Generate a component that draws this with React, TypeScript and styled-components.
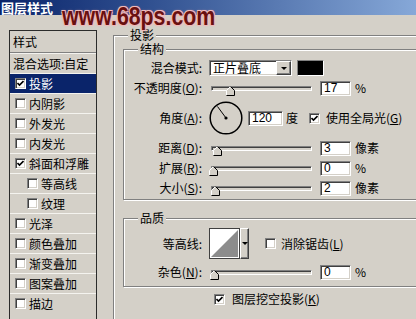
import styled, { createGlobalStyle, css } from "styled-components";

const GlobalStyle = createGlobalStyle`
  body {
    margin: 0;
  }
`;

const FONT = `"Noto Sans CJK SC", "Liberation Sans", sans-serif`;

const sunken = css`
  border: 1px solid;
  border-color: #808080 #fff #fff #808080;
  box-shadow: inset 1px 1px 0 #404040, inset -1px -1px 0 #d4d0c8;
`;

const raised = css`
  border: 1px solid;
  border-color: #fff #404040 #404040 #fff;
  box-shadow: inset -1px -1px 0 #808080;
`;

const Dialog = styled.div`
  position: relative;
  width: 416px;
  height: 319px;
  overflow: hidden;
  background: #d4d0c8;
  font-family: ${FONT};
  font-size: 12px;
  line-height: 16px;
  color: #000;
  box-sizing: border-box;
  * {
    box-sizing: border-box;
  }
`;

const TitleBar = styled.div`
  height: 15px;
  padding-left: 1px;
  display: flex;
  align-items: center;
  background: linear-gradient(90deg, #0a246a 0%, #2f4f8f 35%, #86a8d8 100%);
  color: #fff;
  font-size: 13px;
  font-weight: bold;
  line-height: 15px;
`;

const Watermark = styled.div`
  position: absolute;
  left: 62px;
  top: 1px;
  transform: scaleX(0.82);
  transform-origin: left center;
  font-family: "Liberation Sans", Arial, sans-serif;
  font-weight: bold;
  font-size: 26px;
  line-height: 30px;
  color: #6a1010;
  text-shadow: 1px 1px 0 #f0baba, -1px -1px 0 #f0baba, 1px -1px 0 #f0baba,
    -1px 1px 0 #f0baba, 0 0 3px #e8a0a0;
`;

const Body = styled.div`
  display: flex;
  align-items: flex-start;
  gap: 16px;
  padding: 15px 0 0 9px;
`;

const StyleList = styled.div`
  flex: none;
  width: 88px;
  height: 300px;
  border: 1px solid #2b2b2b;
`;

const ListHeader = styled.div`
  height: 22px;
  padding-left: 3px;
  display: flex;
  align-items: center;
  border-bottom: 1px solid #808080;
`;

const ListRow = styled.div<{ $selected?: boolean; $indent?: boolean; $plain?: boolean }>`
  height: 20px;
  border-top: 1px solid #f4f3ef;
  display: flex;
  align-items: center;
  gap: 3px;
  padding-left: ${(p) => (p.$plain ? 3 : p.$indent ? 17 : 5)}px;
  white-space: nowrap;
  background: ${(p) => (p.$selected ? "#0a246a" : "transparent")};
  color: ${(p) => (p.$selected ? "#fff" : "#000")};
`;

const Side = styled.div`
  flex: none;
  width: 330px;
  padding-top: 5px;
`;

const Group = styled.div<{ $pad: string }>`
  position: relative;
  border: 1px solid #808080;
  box-shadow: inset 1px 1px 0 #fff, 1px 1px 0 #fff;
  padding: ${(p) => p.$pad};
`;

const ShadowGroup = styled(Group)`
  height: 300px;
`;

const Legend = styled.span`
  position: absolute;
  top: -9px;
  left: 14px;
  padding: 0 2px;
  background: #d4d0c8;
  line-height: 16px;
`;

const Rows = styled.div<{ $gap: number }>`
  display: flex;
  flex-direction: column;
  gap: ${(p) => p.$gap}px;
`;

const Row = styled.div<{ $h: number }>`
  height: ${(p) => p.$h}px;
  display: flex;
  align-items: center;
  white-space: nowrap;
`;

const Label = styled.span`
  flex: none;
  width: 78px;
  margin-right: 7px;
  text-align: right;
`;

const Select = styled.div`
  ${sunken};
  width: 83px;
  height: 16px;
  display: flex;
  background: #fff;
`;

const SelectText = styled.span`
  flex: 1;
  padding-left: 3px;
  line-height: 13px;
`;

const DropButton = styled.span<{ $w: number }>`
  ${raised};
  flex: none;
  width: ${(p) => p.$w}px;
  display: flex;
  align-items: center;
  justify-content: center;
  background: #d4d0c8;
  &::after {
    content: "";
    border-left: 3px solid transparent;
    border-right: 3px solid transparent;
    border-top: 3px solid #000;
  }
`;

const Swatch = styled.span`
  flex: none;
  width: 27px;
  height: 16px;
  margin-left: 5px;
  background: #000;
  border: 1px solid;
  border-color: #808080 #fff #fff #808080;
`;

const Field = styled.span<{ $w?: number }>`
  ${sunken};
  flex: none;
  width: ${(p) => p.$w ?? 31}px;
  height: 15px;
  padding-left: 3px;
  background: #fff;
  font-family: "Liberation Sans", Arial, sans-serif;
  font-size: 12px;
  line-height: 13px;
`;

const Unit = styled.span<{ $ml?: number }>`
  margin-left: ${(p) => p.$ml ?? 4}px;
`;

const Track = styled.div`
  ${sunken};
  position: relative;
  flex: none;
  width: 101px;
  height: 5px;
  margin: 0 8px 0 2px;
  background: #d4d0c8;
  box-shadow: inset 1px 1px 0 #404040;
`;

const Thumb = styled.svg`
  position: absolute;
  top: -1px;
`;

const CheckBox = styled.span`
  ${sunken};
  flex: none;
  width: 11px;
  height: 11px;
  background: #fff;
  display: flex;
  align-items: center;
  justify-content: center;
`;

const CheckText = styled.span<{ $ml: number }>`
  margin-left: ${(p) => p.$ml}px;
`;

const Dial = styled.svg`
  flex: none;
  margin-right: 5px;
`;

const ContourPreview = styled.svg`
  flex: none;
`;

const KnockoutRow = styled.div`
  display: flex;
  align-items: center;
  height: 12px;
  margin-top: 6px;
  padding-left: 91px;
  white-space: nowrap;
`;

function Check({ checked }: { checked?: boolean }) {
  return (
    <CheckBox>
      {checked && (
        <svg width="7" height="7" viewBox="0 0 7 7">
          <path d="M0.5 3 L2.5 5 L6.5 1" fill="none" stroke="#000" strokeWidth="1.6" />
        </svg>
      )}
    </CheckBox>
  );
}

function Slider({ at }: { at: number }) {
  return (
    <Track>
      <Thumb width="9" height="10" viewBox="0 0 9 10" style={{ left: at }}>
        <polygon points="0.5,4.5 4.5,0.5 8.5,4.5 8.5,9.5 0.5,9.5" fill="#d4d0c8" />
        <polyline points="0.5,9 0.5,4.5 4.5,0.5" fill="none" stroke="#fff" />
        <polyline points="4.5,0.5 8.5,4.5 8.5,9.5 0.5,9.5" fill="none" stroke="#000" />
      </Thumb>
    </Track>
  );
}

const layers = [
  { name: "投影", on: true, selected: true },
  { name: "内阴影" },
  { name: "外发光" },
  { name: "内发光" },
  { name: "斜面和浮雕", on: true },
  { name: "等高线", indent: true },
  { name: "纹理", indent: true },
  { name: "光泽" },
  { name: "颜色叠加" },
  { name: "渐变叠加" },
  { name: "图案叠加" },
  { name: "描边" },
];

export default function App() {
  return (
    <Dialog>
      <GlobalStyle />
      <TitleBar>图层样式</TitleBar>
      <Body>
        <StyleList>
          <ListHeader>样式</ListHeader>
          <ListRow $plain>混合选项:自定</ListRow>
          {layers.map((l) => (
            <ListRow key={l.name} $selected={l.selected} $indent={l.indent}>
              <Check checked={l.on} />
              {l.name}
            </ListRow>
          ))}
        </StyleList>

        <Side>
          <ShadowGroup $pad="13px 9px 0 9px">
            <Legend>投影</Legend>
            <Group $pad="10px 0 3px 0">
              <Legend>结构</Legend>
              <Rows $gap={4}>
                <Row $h={16}>
                  <Label>混合模式:</Label>
                  <Select>
                    <SelectText>正片叠底</SelectText>
                    <DropButton $w={15} />
                  </Select>
                  <Swatch />
                </Row>
                <Row $h={16}>
                  <Label>
                    不透明度(<u>O</u>):
                  </Label>
                  <Slider at={14} />
                  <Field>17</Field>
                  <Unit>%</Unit>
                </Row>
                <Row $h={36}>
                  <Label>
                    角度(<u>A</u>):
                  </Label>
                  <Dial width="34" height="34" viewBox="0 0 34 34">
                    <circle cx="17" cy="17" r="15.8" fill="none" stroke="#000" strokeWidth="1.5" />
                    <line x1="17" y1="17" x2="8.5" y2="5.5" stroke="#000" strokeWidth="1" />
                    <circle cx="17" cy="17" r="1.6" fill="#000" />
                  </Dial>
                  <Field $w={35}>120</Field>
                  <Unit $ml={3}>度</Unit>
                  <Unit $ml={11}>
                    <Check checked />
                  </Unit>
                  <CheckText $ml={6}>
                    使用全局光(<u>G</u>)
                  </CheckText>
                </Row>
                <Row $h={16}>
                  <Label>
                    距离(<u>D</u>):
                  </Label>
                  <Slider at={1} />
                  <Field>3</Field>
                  <Unit>像素</Unit>
                </Row>
                <Row $h={16}>
                  <Label>
                    扩展(<u>R</u>):
                  </Label>
                  <Slider at={-3} />
                  <Field>0</Field>
                  <Unit>%</Unit>
                </Row>
                <Row $h={16}>
                  <Label>
                    大小(<u>S</u>):
                  </Label>
                  <Slider at={-1} />
                  <Field>2</Field>
                  <Unit>像素</Unit>
                </Row>
              </Rows>
            </Group>

            <Group $pad="9px 0 6px 0" style={{ marginTop: 18 }}>
              <Legend>品质</Legend>
              <Rows $gap={5}>
                <Row $h={31}>
                  <Label>等高线:</Label>
                  <ContourPreview width="31" height="31" viewBox="0 0 31 31">
                    <rect x="0.5" y="0.5" width="30" height="30" fill="#fff" stroke="#404040" />
                    <polygon points="2,29 29,2 29,29" fill="#8c8c8c" />
                  </ContourPreview>
                  <DropButton $w={9} style={{ height: 31 }} />
                  <Unit $ml={16}>
                    <Check />
                  </Unit>
                  <CheckText $ml={5}>
                    消除锯齿(<u>L</u>)
                  </CheckText>
                </Row>
                <Row $h={16}>
                  <Label>
                    杂色(<u>N</u>):
                  </Label>
                  <Slider at={-2} />
                  <Field>0</Field>
                  <Unit>%</Unit>
                </Row>
              </Rows>
            </Group>

            <KnockoutRow>
              <Check checked />
              <CheckText $ml={7}>
                图层挖空投影(<u>K</u>)
              </CheckText>
            </KnockoutRow>
          </ShadowGroup>
        </Side>
      </Body>
      <Watermark>www.68ps.com</Watermark>
    </Dialog>
  );
}
